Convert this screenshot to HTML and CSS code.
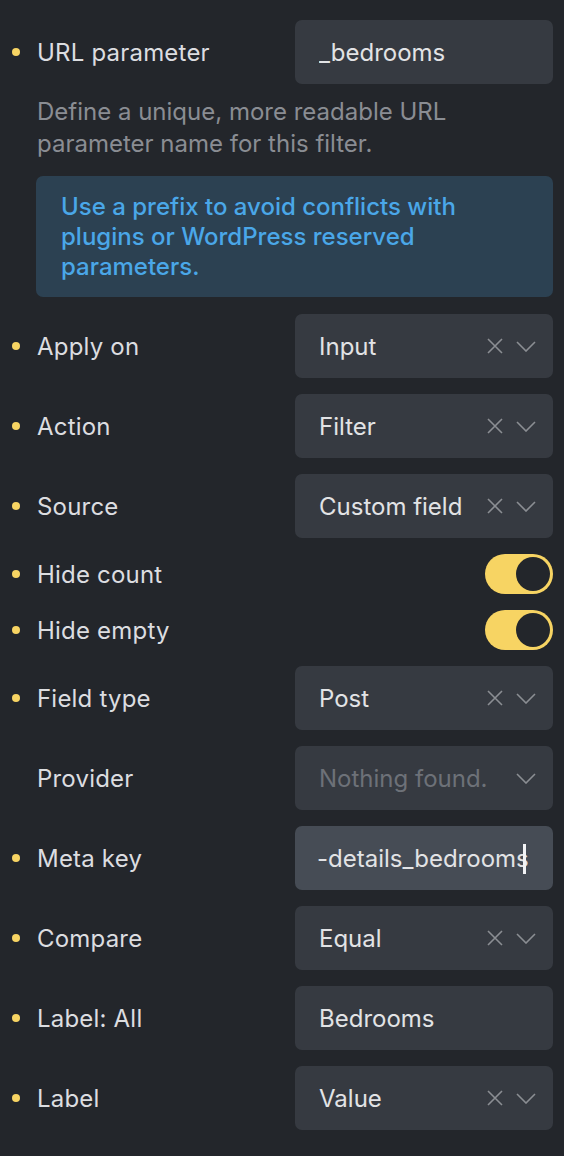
FILE: index.html
```html
<!DOCTYPE html>
<html>
<head>
<meta charset="utf-8">
<link rel="stylesheet" href="styles.css">
</head>
<body>
<div class="panel">
  <div class="row">
    <span class="dot"></span><span class="label">URL parameter</span>
    <div class="control"><span class="value">_bedrooms</span></div>
  </div>
  <p class="desc">Define a unique, more readable URL parameter name for this filter.</p>
  <div class="info">Use a prefix to avoid conflicts with plugins or WordPress reserved parameters.</div>

  <div class="row first">
    <span class="dot"></span><span class="label">Apply on</span>
    <div class="control"><span class="value">Input</span>
      <svg class="ix" viewBox="0 0 16 16"><path d="M1 1L15 15M15 1L1 15"/></svg>
      <svg class="chev" viewBox="0 0 20 11"><path d="M1 1L10 10L19 1"/></svg>
    </div>
  </div>
  <div class="row">
    <span class="dot"></span><span class="label">Action</span>
    <div class="control"><span class="value">Filter</span>
      <svg class="ix" viewBox="0 0 16 16"><path d="M1 1L15 15M15 1L1 15"/></svg>
      <svg class="chev" viewBox="0 0 20 11"><path d="M1 1L10 10L19 1"/></svg>
    </div>
  </div>
  <div class="row">
    <span class="dot"></span><span class="label">Source</span>
    <div class="control"><span class="value">Custom field</span>
      <svg class="ix" viewBox="0 0 16 16"><path d="M1 1L15 15M15 1L1 15"/></svg>
      <svg class="chev" viewBox="0 0 20 11"><path d="M1 1L10 10L19 1"/></svg>
    </div>
  </div>
  <div class="row short">
    <span class="dot"></span><span class="label">Hide count</span>
    <div class="toggle"><span class="knob"></span></div>
  </div>
  <div class="row short">
    <span class="dot"></span><span class="label">Hide empty</span>
    <div class="toggle"><span class="knob"></span></div>
  </div>
  <div class="row">
    <span class="dot"></span><span class="label">Field type</span>
    <div class="control"><span class="value">Post</span>
      <svg class="ix" viewBox="0 0 16 16"><path d="M1 1L15 15M15 1L1 15"/></svg>
      <svg class="chev" viewBox="0 0 20 11"><path d="M1 1L10 10L19 1"/></svg>
    </div>
  </div>
  <div class="row">
    <span class="nodot"></span><span class="label">Provider</span>
    <div class="control"><span class="value placeholder">Nothing found.</span>
      <svg class="chev" viewBox="0 0 20 11"><path d="M1 1L10 10L19 1"/></svg>
    </div>
  </div>
  <div class="row">
    <span class="dot"></span><span class="label">Meta key</span>
    <div class="control focused"><span class="value">-details_bedrooms</span><span class="caret"></span></div>
  </div>
  <div class="row">
    <span class="dot"></span><span class="label">Compare</span>
    <div class="control"><span class="value">Equal</span>
      <svg class="ix" viewBox="0 0 16 16"><path d="M1 1L15 15M15 1L1 15"/></svg>
      <svg class="chev" viewBox="0 0 20 11"><path d="M1 1L10 10L19 1"/></svg>
    </div>
  </div>
  <div class="row">
    <span class="dot"></span><span class="label">Label: All</span>
    <div class="control"><span class="value">Bedrooms</span></div>
  </div>
  <div class="row">
    <span class="dot"></span><span class="label">Label</span>
    <div class="control"><span class="value">Value</span>
      <svg class="ix" viewBox="0 0 16 16"><path d="M1 1L15 15M15 1L1 15"/></svg>
      <svg class="chev" viewBox="0 0 20 11"><path d="M1 1L10 10L19 1"/></svg>
    </div>
  </div>
</div>
</body>
</html>
```
FILE: styles.css
```css
html, body {
  margin: 0;
  padding: 0;
  background: #23262b;
}
body {
  font-family: Inter, "Noto Sans", sans-serif;
  color: #dfe0e3;
  font-size: 24px;
}
.panel {
  width: 564px;
  height: 1156px;
  padding: 20px 11px 0 0;
  box-sizing: border-box;
  overflow: hidden;
  display: flex;
  flex-direction: column;
}
.row {
  display: flex;
  align-items: center;
  height: 64px;
  margin-bottom: 16px;
  flex: none;
}
.row.first { margin-top: 17px; }
.row.short { height: 40px; }
.dot, .nodot {
  width: 8px;
  height: 8px;
  border-radius: 50%;
  margin: 0 17px 0 12px;
  flex: none;
}
.dot { background: #f7d463; }
.label {
  flex: 1;
  letter-spacing: 0.2px;
  color: #dcdde0;
}
.control {
  width: 258px;
  height: 64px;
  box-sizing: border-box;
  background: #363a41;
  border-radius: 7px;
  display: flex;
  align-items: center;
  padding: 0 17px 0 24px;
  position: relative;
}
.control.focused { background: #464c55; padding-left: 22px; }
.value {
  flex: 1;
  color: #e2e3e5;
  white-space: nowrap;
  overflow: hidden;
}
.value.placeholder { color: #6d7178; }
.ix {
  width: 16px;
  height: 16px;
  margin-right: 13px;
  flex: none;
}
.chev {
  width: 20px;
  height: 11px;
  flex: none;
}
.ix path, .chev path {
  fill: none;
  stroke: #8b8e93;
  stroke-width: 1.6;
}
.caret {
  position: absolute;
  left: 228px;
  top: 18px;
  width: 3px;
  height: 30px;
  background: #f2f3f5;
}
.desc {
  margin: -4px 0 16px 37px;
  line-height: 32px;
  color: #8a8d93;
  font-size: 24px;
  flex: none;
}
.info {
  margin-left: 36px;
  background: #2c4152;
  border-radius: 7px;
  padding: 16px 24px 15px 25px;
  line-height: 30px;
  color: #4aa7e8;
  font-weight: 500;
  font-size: 24px;
  flex: none;
}
.toggle {
  width: 68px;
  height: 40px;
  border-radius: 20px;
  background: #f7d463;
  position: relative;
  flex: none;
}
.knob {
  position: absolute;
  right: 3px;
  top: 3px;
  width: 34px;
  height: 34px;
  border-radius: 50%;
  background: #23262b;
}
```
